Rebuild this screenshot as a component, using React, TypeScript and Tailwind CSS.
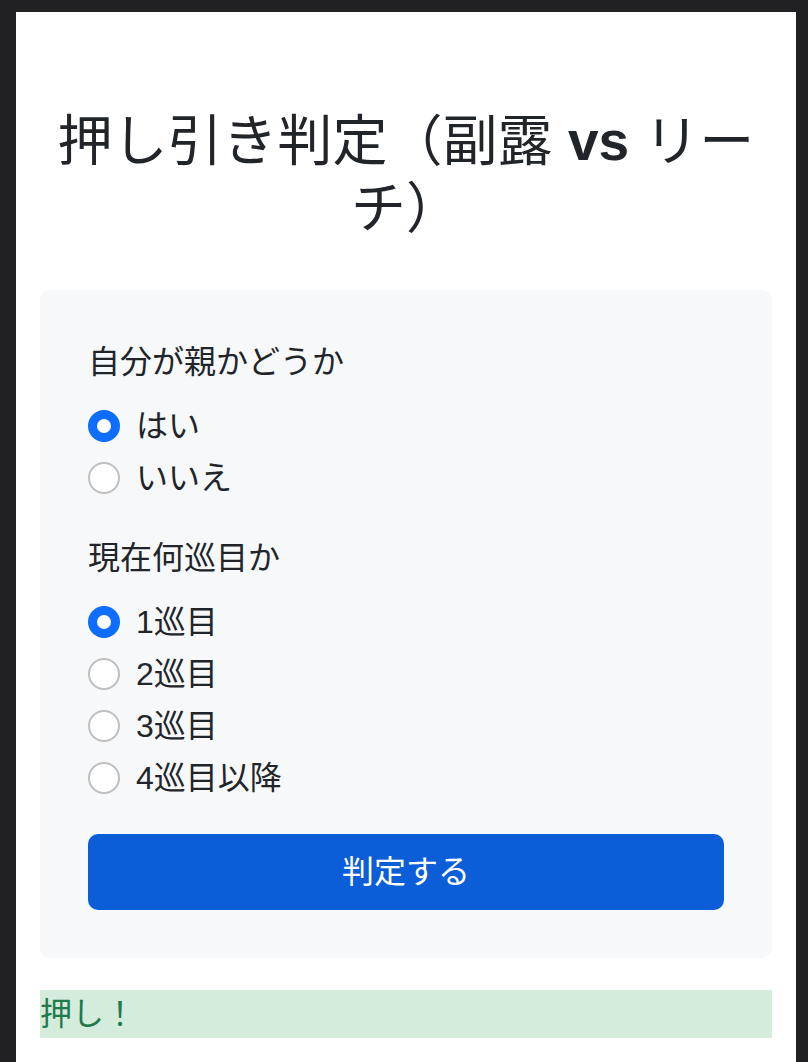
import { useState } from "react";

const oyaOptions = ["はい", "いいえ"];
const junmeOptions = ["1巡目", "2巡目", "3巡目", "4巡目以降"];

function Radio({
  label,
  checked,
  onSelect,
}: {
  label: string;
  checked: boolean;
  onSelect: () => void;
}) {
  return (
    <label
      className="mb-[4px] flex h-[48px] cursor-pointer items-start pl-0"
      onClick={onSelect}
    >
      {checked ? (
        <span className="mt-[8px] flex h-[32px] w-[32px] shrink-0 items-center justify-center rounded-full bg-[#0d6efd]">
          <span className="h-[14px] w-[14px] rounded-full bg-white" />
        </span>
      ) : (
        <span className="mt-[8px] h-[32px] w-[32px] shrink-0 rounded-full border-2 border-[#bfbfbf] bg-white" />
      )}
      <span className="ml-[16px] text-[32px] leading-[48px]">{label}</span>
    </label>
  );
}

export default function App() {
  const [oya, setOya] = useState(0);
  const [junme, setJunme] = useState(0);
  const [result, setResult] = useState("押し！");

  const judge = () => {
    setResult(junme < 2 || oya === 0 ? "押し！" : "引き！");
  };

  return (
    <div className="min-h-screen bg-[#212124] pl-4 pr-3 pt-3 font-['Liberation_Sans','Noto_Sans_CJK_JP',sans-serif] text-[#212529]">
      <div className="min-h-[1050px] bg-white px-6 pt-24 pb-12">
        <h1 className="mb-12 text-center text-[55px] font-normal leading-[67px]">
          押し引き判定（副露 <span className="font-bold">vs</span> リーチ）
        </h1>

        <div className="rounded-[10px] bg-[#f7f8fa] p-12">
          <div className="mb-8">
            <div className="mb-4 text-[32px] leading-[48px]">自分が親かどうか</div>
            {oyaOptions.map((o, i) => (
              <Radio
                key={o}
                label={o}
                checked={oya === i}
                onSelect={() => setOya(i)}
              />
            ))}
          </div>

          <div className="mb-8">
            <div className="mb-4 text-[32px] leading-[48px]">現在何巡目か</div>
            {junmeOptions.map((o, i) => (
              <Radio
                key={o}
                label={o}
                checked={junme === i}
                onSelect={() => setJunme(i)}
              />
            ))}
          </div>

          <button
            onClick={judge}
            className="h-[76px] w-full rounded-[10px] bg-[#0b5ed7] text-[32px] leading-[48px] text-white"
          >
            判定する
          </button>
        </div>

        <div className="mt-8 bg-[#d4ecdc] text-[32px] leading-[48px] text-[#1f7a4c]">
          {result}
        </div>
      </div>
    </div>
  );
}
